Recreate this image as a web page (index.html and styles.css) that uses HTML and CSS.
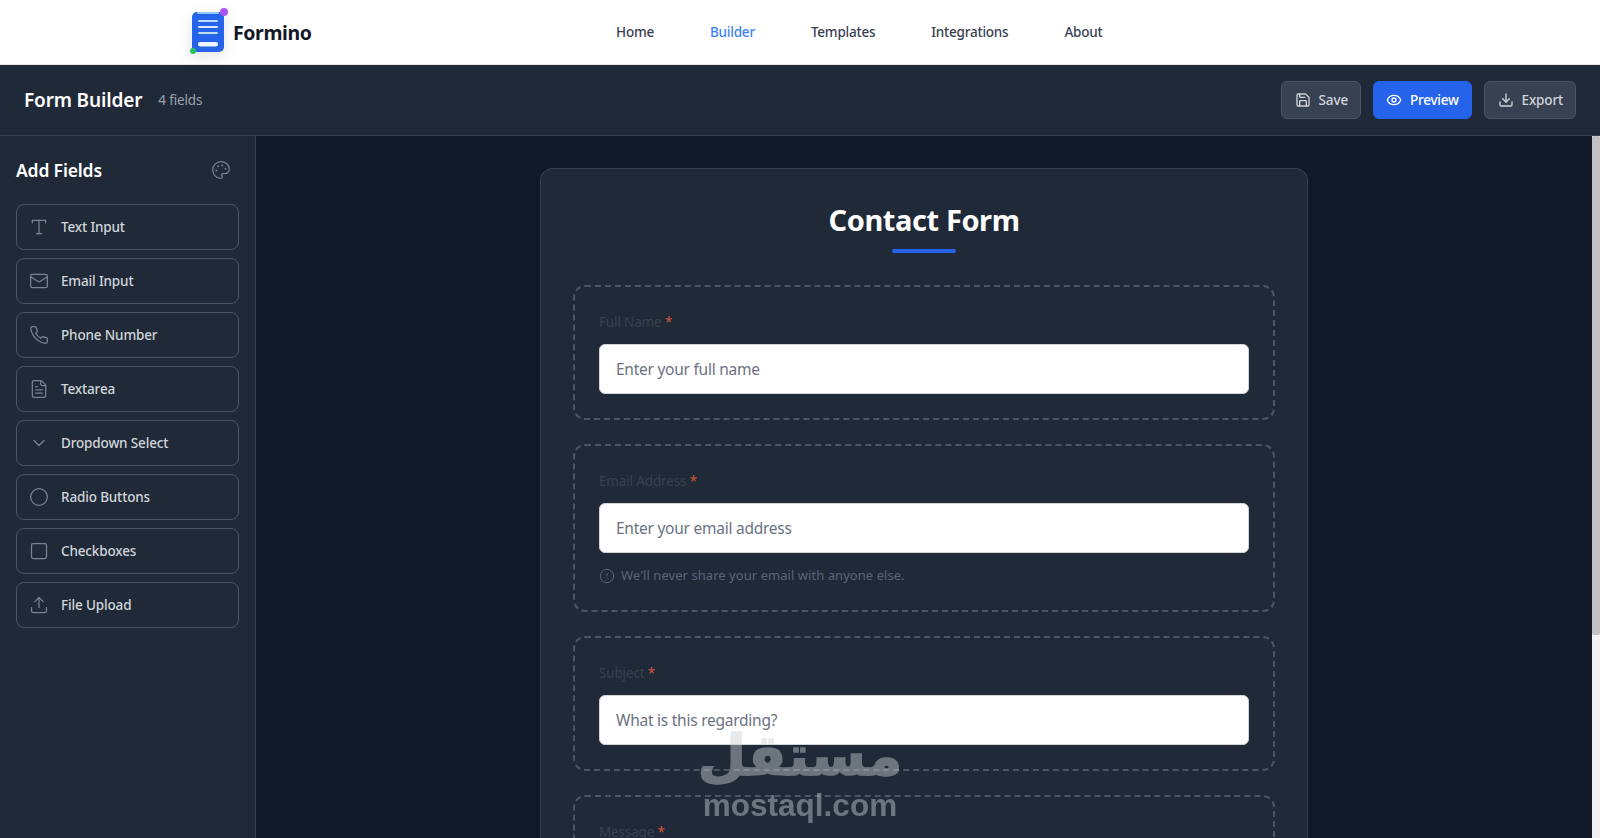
FILE: index.html
```html
<!DOCTYPE html>
<html lang="en">
<head>
  <meta charset="UTF-8" />
  <meta name="viewport" content="width=device-width, initial-scale=1" />
  <title>Formino - Form Builder</title>
  <link rel="stylesheet" href="styles.css">
</head>
<body>
  <!-- Top nav -->
  <nav class="site-nav">
    <a class="logo" href="#">
      <svg class="logo-mark" viewBox="0 0 40 50" width="40" height="50">
        <rect x="4" y="3" width="32" height="40" rx="5" fill="#2563eb" />
        <rect x="9" y="3" width="22" height="2" rx="1" fill="#93c5fd" />
        <rect x="10" y="11" width="20" height="2" rx="1" fill="#bfdbfe" />
        <rect x="10" y="17" width="20" height="2" rx="1" fill="#dbeafe" />
        <rect x="10" y="23" width="20" height="2" rx="1" fill="#bfdbfe" />
        <rect x="10" y="33" width="20" height="4.500" rx="2.250" fill="#eff6ff" />
        <circle cx="36" cy="3" r="4" fill="#a855f7" />
        <circle cx="5" cy="42" r="3" fill="#22c55e" />
      </svg>
      <span class="logo-text">Formino</span>
    </a>
    <div class="nav-links">
      <a href="#">Home</a>
      <a href="#" class="active">Builder</a>
      <a href="#">Templates</a>
      <a href="#">Integrations</a>
      <a href="#">About</a>
    </div>
  </nav>

  <!-- Toolbar -->
  <header class="toolbar">
    <div class="toolbar-title">
      <h1>Form Builder</h1>
      <span class="field-count">4 fields</span>
    </div>
    <div class="toolbar-actions">
      <button class="btn">
        <svg class="icon icon-sm" viewBox="0 0 24 24"><path d="M15.2 3a2 2 0 0 1 1.4.6l3.800 3.800a2 2 0 0 1 .6 1.400V19a2 2 0 0 1-2 2H5a2 2 0 0 1-2-2V5a2 2 0 0 1 2-2z"/><path d="M17 21v-7a1 1 0 0 0-1-1H8a1 1 0 0 0-1 1v7"/><path d="M7 3v4a1 1 0 0 0 1 1h7"/></svg>
        Save
      </button>
      <button class="btn btn-primary">
        <svg class="icon icon-sm" viewBox="0 0 24 24"><path d="M2.062 12.348a1 1 0 0 1 0-.696 10.750 10.750 0 0 1 19.876 0 1 1 0 0 1 0 .696 10.750 10.750 0 0 1-19.876 0"/><circle cx="12" cy="12" r="3"/></svg>
        Preview
      </button>
      <button class="btn">
        <svg class="icon icon-sm" viewBox="0 0 24 24"><path d="M21 15v4a2 2 0 0 1-2 2H5a2 2 0 0 1-2-2v-4"/><polyline points="7 10 12 15 17 10"/><line x1="12" y1="15" x2="12" y2="3"/></svg>
        Export
      </button>
    </div>
  </header>

  <div class="workspace">
    <!-- Field palette -->
    <aside class="sidebar">
      <div class="sidebar-head">
        <h2>Add Fields</h2>
        <svg class="icon palette-icon" viewBox="0 0 24 24"><circle cx="13.500" cy="6.500" r=".5"/><circle cx="17.500" cy="10.500" r=".5"/><circle cx="8.500" cy="7.500" r=".5"/><circle cx="6.500" cy="12.500" r=".5"/><path d="M12 2C6.500 2 2 6.500 2 12s4.500 10 10 10c.926 0 1.648-.746 1.648-1.688 0-.437-.18-.835-.437-1.125-.29-.289-.438-.652-.438-1.125a1.640 1.640 0 0 1 1.668-1.668h1.996c3.051 0 5.555-2.503 5.555-5.554C21.965 6.012 17.461 2 12 2z"/></svg>
      </div>
      <div class="field-list">
        <button class="field-type">
          <svg class="icon" viewBox="0 0 24 24"><polyline points="4 7 4 4 20 4 20 7"/><line x1="9" y1="20" x2="15" y2="20"/><line x1="12" y1="4" x2="12" y2="20"/></svg>
          Text Input
        </button>
        <button class="field-type">
          <svg class="icon" viewBox="0 0 24 24"><rect x="2" y="4" width="20" height="16" rx="2"/><path d="m22 7-8.970 5.700a1.940 1.940 0 0 1-2.060 0L2 7"/></svg>
          Email Input
        </button>
        <button class="field-type">
          <svg class="icon" viewBox="0 0 24 24"><path d="M22 16.920v3a2 2 0 0 1-2.180 2 19.790 19.790 0 0 1-8.630-3.070 19.500 19.500 0 0 1-6-6 19.790 19.790 0 0 1-3.070-8.670A2 2 0 0 1 4.110 2h3a2 2 0 0 1 2 1.720 12.840 12.840 0 0 0 .7 2.810 2 2 0 0 1-.45 2.110L8.090 9.910a16 16 0 0 0 6 6l1.270-1.270a2 2 0 0 1 2.110-.45 12.840 12.840 0 0 0 2.810.7A2 2 0 0 1 22 16.920z"/></svg>
          Phone Number
        </button>
        <button class="field-type">
          <svg class="icon" viewBox="0 0 24 24"><path d="M15 2H6a2 2 0 0 0-2 2v16a2 2 0 0 0 2 2h12a2 2 0 0 0 2-2V7Z"/><path d="M14 2v4a2 2 0 0 0 2 2h4"/><path d="M10 9H8"/><path d="M16 13H8"/><path d="M16 17H8"/></svg>
          Textarea
        </button>
        <button class="field-type">
          <svg class="icon" viewBox="0 0 24 24"><path d="m6 9 6 6 6-6"/></svg>
          Dropdown Select
        </button>
        <button class="field-type">
          <svg class="icon" viewBox="0 0 24 24"><circle cx="12" cy="12" r="10"/></svg>
          Radio Buttons
        </button>
        <button class="field-type">
          <svg class="icon" viewBox="0 0 24 24"><rect x="3" y="3" width="18" height="18" rx="2"/></svg>
          Checkboxes
        </button>
        <button class="field-type">
          <svg class="icon" viewBox="0 0 24 24"><path d="M21 15v4a2 2 0 0 1-2 2H5a2 2 0 0 1-2-2v-4"/><polyline points="17 8 12 3 7 8"/><line x1="12" y1="3" x2="12" y2="15"/></svg>
          File Upload
        </button>
      </div>
    </aside>

    <!-- Canvas -->
    <main class="canvas">
      <form class="form-card">
        <h2 class="form-title">Contact Form</h2>

        <div class="form-field">
          <label for="full-name">Full Name <span class="req">*</span></label>
          <input type="text" id="full-name" placeholder="Enter your full name" />
        </div>

        <div class="form-field">
          <label for="email">Email Address <span class="req">*</span></label>
          <input type="email" id="email" placeholder="Enter your email address" />
          <p class="hint">
            <svg class="icon icon-xs" viewBox="0 0 24 24"><circle cx="12" cy="12" r="10"/><line x1="12" y1="8" x2="12" y2="12"/><line x1="12" y1="16" x2="12.010" y2="16"/></svg>
            We'll never share your email with anyone else.
          </p>
        </div>

        <div class="form-field">
          <label for="subject">Subject <span class="req">*</span></label>
          <input type="text" id="subject" placeholder="What is this regarding?" />
        </div>

        <div class="form-field">
          <label for="message">Message <span class="req">*</span></label>
          <textarea id="message" rows="5" placeholder="Your message"></textarea>
        </div>
      </form>
    </main>

    <div class="scrollbar"><div class="scrollbar-thumb"></div></div>
  </div>

  <!-- Watermark -->
  <div class="watermark">
    <span class="watermark-ar" lang="ar" dir="rtl">مستقل</span>
    <span class="watermark-en">mostaql.com</span>
  </div>
</body>
</html>
```

FILE: styles.css
```css
* {
  box-sizing: border-box;
  margin: 0;
  padding: 0;
  font-family: 'Noto Sans', sans-serif;
}

body {
  height: 100vh;
  display: flex;
  flex-direction: column;
  overflow: hidden;
  background: #111827;
}

a {
  text-decoration: none;
}

.icon {
  width: 20px;
  height: 20px;
  flex-shrink: 0;
  fill: none;
  stroke: currentColor;
  stroke-width: 1.5;
  stroke-linecap: round;
  stroke-linejoin: round;
}

.icon-sm {
  width: 16px;
  height: 16px;
  stroke-width: 2;
}

.icon-xs {
  width: 16px;
  height: 16px;
}

/* Top nav */
.site-nav {
  height: 65px;
  flex-shrink: 0;
  display: flex;
  align-items: center;
  padding-left: 188px;
  background: #fff;
  border-bottom: 1px solid #e5e7eb;
}

.logo {
  display: flex;
  align-items: center;
  width: 428px;
}

.logo-mark {
  margin-top: 4px;
  overflow: visible;
  filter: drop-shadow(0 5px 7px rgba(0, 0, 0, 0.1));
}

.logo-text {
  margin-left: 5px;
  font-size: 19.5px;
  font-weight: 700;
  letter-spacing: -0.4px;
  color: #111827;
}

.nav-links {
  display: flex;
  gap: 56px;
}

.nav-links a {
  font-size: 13.5px;
  font-weight: 500;
  letter-spacing: -0.22px;
  color: #374151;
}

.nav-links a.active {
  color: #3b82f6;
}

/* Toolbar */
.toolbar {
  height: 71px;
  flex-shrink: 0;
  display: flex;
  align-items: center;
  justify-content: space-between;
  padding: 0 24px;
  background: #1f2937;
  border-bottom: 1px solid #374151;
}

.toolbar-title {
  display: flex;
  align-items: center;
  gap: 16px;
}

.toolbar-title h1 {
  font-size: 19px;
  font-weight: 600;
  letter-spacing: -0.15px;
  color: #fff;
}

.field-count {
  font-size: 13.5px;
  letter-spacing: -0.15px;
  color: #9ca3af;
}

.toolbar-actions {
  display: flex;
  gap: 12px;
}

.btn {
  height: 38px;
  display: flex;
  align-items: center;
  gap: 8px;
  padding: 0 12px 0 13px;
  background: #374151;
  border: 1px solid #4b5563;
  border-radius: 6px;
  color: #d1d5db;
  font-size: 13.5px;
  font-weight: 500;
  letter-spacing: -0.15px;
}

.btn-primary {
  padding: 0 12px;
  background: #2563eb;
  border-color: #2563eb;
  color: #fff;
  letter-spacing: -0.25px;
}

/* Sidebar */
.workspace {
  flex: 1;
  min-height: 0;
  display: flex;
}

.sidebar {
  width: 256px;
  flex-shrink: 0;
  padding: 16px 16px 0;
  background: #1f2937;
  border-right: 1px solid #374151;
}

.sidebar-head {
  display: flex;
  align-items: center;
  justify-content: space-between;
  height: 36px;
  padding: 0 8px 1px 0;
  margin-bottom: 16px;
}

.sidebar-head h2 {
  font-size: 17.5px;
  font-weight: 600;
  letter-spacing: -0.15px;
  color: #fff;
}

.palette-icon {
  color: #7b8390;
}

.field-list {
  display: flex;
  flex-direction: column;
  gap: 8px;
}

.field-type {
  height: 46px;
  display: flex;
  align-items: center;
  gap: 12px;
  padding: 0 12px;
  background: transparent;
  border: 1px solid #4b5563;
  border-radius: 8px;
  color: #d1d5db;
  font-size: 13.5px;
  font-weight: 500;
  letter-spacing: -0.15px;
  text-align: left;
}

.field-type .icon {
  color: #7b8390;
}

/* Canvas */
.canvas {
  flex: 1;
  min-width: 0;
  overflow: hidden;
  padding: 32px 0;
  background: #111827;
}

.scrollbar {
  width: 8px;
  flex-shrink: 0;
  background: #f1f1f1;
}

.scrollbar-thumb {
  height: 499px;
  background: #c1c1c1;
  border-radius: 2px;
}

.form-card {
  width: 768px;
  margin: 0 auto;
  padding: 32px;
  background: #1f2937;
  border: 1px solid #374151;
  border-radius: 12px;
}

.form-title {
  margin-bottom: 32px;
  text-align: center;
  font-size: 29px;
  font-weight: 700;
  letter-spacing: -0.4px;
  line-height: 38px;
  color: #fff;
}

.form-title::after {
  content: '';
  display: block;
  width: 64px;
  height: 4px;
  margin: 10px auto 0;
  border-radius: 2px;
  background: #2563eb;
}

.form-field {
  padding: 24px;
  margin-bottom: 24px;
  border: 2px dashed #4b5563;
  border-radius: 12px;
}

.form-field label {
  display: block;
  padding-top: 1px;
  margin-bottom: 11px;
  font-size: 13.5px;
  letter-spacing: -0.15px;
  line-height: 21px;
  color: #374151;
}

.req {
  color: #d4553a;
}

.form-field input,
.form-field textarea {
  display: block;
  width: 100%;
  padding: 12px 16px;
  background: #fff;
  border: 1px solid #d1d5db;
  border-radius: 6px;
  font-size: 15.5px;
  letter-spacing: -0.25px;
  color: #111827;
  outline: none;
}

.form-field input {
  height: 50px;
}

.form-field input::placeholder,
.form-field textarea::placeholder {
  color: #6b7280;
}

.hint {
  display: flex;
  align-items: center;
  gap: 6px;
  margin-top: 12px;
  font-size: 13px;
  letter-spacing: 0.05px;
  line-height: 21px;
  color: #5b6577;
}

/* Watermark */
.watermark {
  position: absolute;
  left: 700px;
  top: 722px;
  width: 200px;
  display: flex;
  flex-direction: column;
  align-items: center;
  color: #cdd0d4;
  opacity: 0.45;
  pointer-events: none;
}

.watermark-ar {
  font-family: 'DejaVu Sans', sans-serif;
  font-size: 56px;
  font-weight: 700;
  line-height: 68px;
  -webkit-text-stroke: 1.5px #cdd0d4;
}

.watermark-en {
  font-family: 'Liberation Sans', sans-serif;
  font-size: 31.5px;
  font-weight: 700;
  line-height: 30px;
}
```
